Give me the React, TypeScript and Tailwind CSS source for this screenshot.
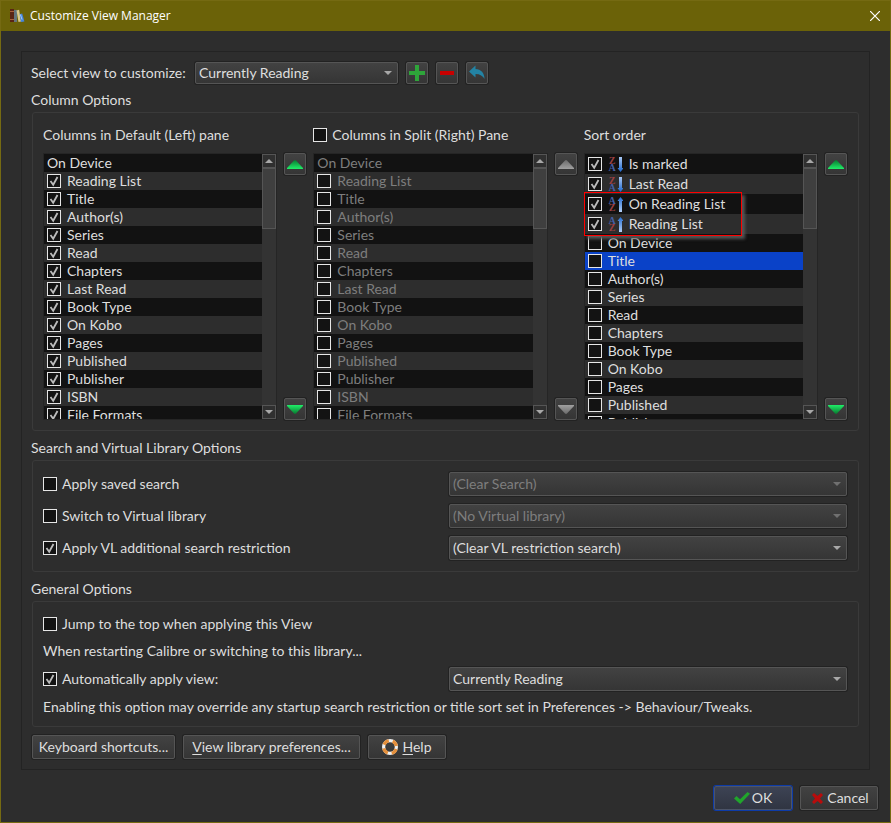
import React, { useId, useState } from "react";
import clsx from "clsx";

type SortDir = "asc" | "desc";

interface ColumnItem {
  name: string;
  checked?: boolean;
  noBox?: boolean;
  sort?: SortDir;
  selected?: boolean;
}

const columnNames = [
  "Reading List",
  "Title",
  "Author(s)",
  "Series",
  "Read",
  "Chapters",
  "Last Read",
  "Book Type",
  "On Kobo",
  "Pages",
  "Published",
  "Publisher",
  "ISBN",
  "File Formats",
];

const leftColumns: ColumnItem[] = [
  { name: "On Device", noBox: true },
  ...columnNames.map((name) => ({ name, checked: true })),
];

const rightColumns: ColumnItem[] = [
  { name: "On Device", noBox: true },
  ...columnNames.map((name) => ({ name })),
];

const sortColumns: ColumnItem[] = [
  { name: "Is marked", checked: true, sort: "desc" },
  { name: "Last Read", checked: true, sort: "desc" },
  { name: "On Reading List", checked: true, sort: "asc" },
  { name: "Reading List", checked: true, sort: "asc" },
  { name: "On Device" },
  { name: "Title", selected: true },
  { name: "Author(s)" },
  { name: "Series" },
  { name: "Read" },
  { name: "Chapters" },
  { name: "Book Type" },
  { name: "On Kobo" },
  { name: "Pages" },
  { name: "Published" },
  { name: "Publisher" },
];

const raised =
  "rounded-[2px] border border-[#555] bg-linear-to-b from-[#424242] to-[#353535] shadow-[0_0_0_1px_#222]";

/* =====================
   Icons
===================== */
const BooksIcon = () => (
  <svg width="16" height="16" viewBox="0 0 16 16" aria-hidden="true">
    <rect x="1" y="1" width="4" height="13" fill="#5a2414" />
    <path d="M1 3.5h4M1 11.5h4" stroke="#a8603c" />
    <rect x="5" y="2" width="3" height="12" fill="#64747c" />
    <path d="M7.5 2.4l2.6-.6 2 11.8-2.6.5z" fill="#d9c88c" />
    <path d="M10.6 6.2l2.6-.7 2.2 8-3.4.6z" fill="#4585dc" />
    <path d="M11.4 6.5l1.6 5" stroke="#a8ccfa" />
  </svg>
);

const Triangle = ({ down, muted, small }: { down?: boolean; muted?: boolean; small?: boolean }) => {
  const id = useId();
  const stops = muted ? ["#6c6c6c", "#a0a0a0"] : ["#087a30", "#20ee68"];
  if (small) {
    return (
      <svg width="8" height="4" viewBox="0 0 8 4" className={clsx(down && "rotate-180")} aria-hidden="true">
        <path d="M0 4L4 0l4 4z" fill={muted ? "#707070" : "#a8a8a8"} />
      </svg>
    );
  }
  return (
    <svg width="16" height="9" viewBox="0 0 16 9" className={clsx(down && "rotate-180")} aria-hidden="true">
      <linearGradient id={id} x1="0" y1="0" x2="0" y2="1">
        <stop offset="0" stopColor={stops[0]} />
        <stop offset="1" stopColor={stops[1]} />
      </linearGradient>
      <path d="M0 8L7 .5q1-.8 2 0L16 8v1H0z" fill={`url(#${id})`} />
    </svg>
  );
};

const SortIcon = ({ dir }: { dir: SortDir }) => {
  const id = useId();
  const letterA = "#4560a4";
  const letterZ = "#9a4042";
  const desc = dir === "desc";
  return (
    <svg width="15" height="16" viewBox="0 0 15 16" className="shrink-0" aria-hidden="true">
      <linearGradient id={id} gradientUnits="userSpaceOnUse" x1="0" y1="0" x2="0" y2="16">
        <stop offset="0" stopColor={desc ? "#b4d0f8" : "#1c68d0"} />
        <stop offset="1" stopColor={desc ? "#1c68d0" : "#b4d0f8"} />
      </linearGradient>
      <g fontFamily="Liberation Serif, serif" fontSize="10" fontWeight="700" textAnchor="middle">
        <text x="4" y="8" fill={desc ? letterZ : letterA}>{desc ? "Z" : "A"}</text>
        <text x="4" y="15" fill={desc ? letterA : letterZ}>{desc ? "A" : "Z"}</text>
      </g>
      <path
        d={desc ? "M11 1h3v11h1.500L12.500 16l-3-4H11z" : "M11 16h3V5h1.500L12.500 1l-3 4H11z"}
        fill={`url(#${id})`}
      />
    </svg>
  );
};

const PlusIcon = () => (
  <svg width="16" height="16" viewBox="0 0 16 16" aria-hidden="true">
    <path d="M6 0h4v6h6v4h-6v6H6v-6H0V6h6z" fill="#2ea53a" />
  </svg>
);

const MinusIcon = () => (
  <svg width="16" height="16" viewBox="0 0 16 16" aria-hidden="true">
    <rect x="1" y="6" width="14" height="4" fill="#c80000" />
  </svg>
);

const UndoIcon = () => (
  <svg width="16" height="16" viewBox="0 0 16 16" aria-hidden="true">
    <path d="M0 6.500L6.500.5v3.600c5.500.3 9 4 9 9.900C14 11 11 9 6.500 9v3.600z" fill="#2383a4" />
  </svg>
);

const HelpIcon = () => (
  <svg width="16" height="16" viewBox="0 0 16 16" aria-hidden="true">
    <circle cx="8" cy="8" r="6.4" fill="none" stroke="#f0f0f0" strokeWidth="3.2" />
    <circle
      cx="8"
      cy="8"
      r="6.4"
      fill="none"
      stroke="#e58f3a"
      strokeWidth="3.2"
      strokeDasharray="6 4.053"
      strokeDashoffset="-2.03"
    />
  </svg>
);

const OkIcon = () => (
  <svg width="16" height="16" viewBox="0 0 16 16" aria-hidden="true">
    <path d="M0 8.500L2.500 6 6 9.200 13.500 2 16 3.800 6.200 14z" fill="#21a52c" />
  </svg>
);

const CancelIcon = () => (
  <svg width="16" height="16" viewBox="0 0 16 16" aria-hidden="true">
    <path d="M3 5l2-2 3.500 3L12 3l2 2-3 3.500L14 12l-2 2-3.500-3L5 14l-2-2 3-3.500z" fill="#b80c0c" />
  </svg>
);

/* =====================
   Controls
===================== */
interface CheckProps {
  checked?: boolean;
  disabled?: boolean;
  children?: React.ReactNode;
  className?: string;
}

const Check = ({ checked = false, disabled, children, className }: CheckProps) => {
  const [on, setOn] = useState(checked);
  return (
    <label className={clsx("flex items-center", className)}>
      <span className="relative block size-3.5 shrink-0">
        <input
          type="checkbox"
          checked={on}
          disabled={disabled}
          onChange={() => setOn(!on)}
          className="block size-3.5 appearance-none border border-[#e6e6e6] bg-[#131313]"
        />
        {on && (
          <svg viewBox="0 0 14 14" className="pointer-events-none absolute inset-0 size-3.5" aria-hidden="true">
            <path d="M3.500 7l2.700 3.800L10.500 3" fill="none" stroke="#bcbcbc" strokeWidth="1.800" />
          </svg>
        )}
      </span>
      {children}
    </label>
  );
};

interface ComboProps {
  id: string;
  value: string;
  label?: string;
  disabled?: boolean;
  className?: string;
}

const Combo = ({ id, value, label, disabled, className }: ComboProps) => (
  <div className={clsx("relative", className)}>
    <select
      id={id}
      aria-label={label}
      disabled={disabled}
      className={clsx(
        raised,
        "block size-full appearance-none px-[3px] disabled:opacity-100",
        disabled ? "text-[#7e7e7e]" : "text-[#dedede]",
      )}
    >
      <option>{value}</option>
    </select>
    <span className="pointer-events-none absolute inset-y-0 right-1.5 flex items-center">
      <Triangle small down muted={disabled} />
    </span>
  </div>
);

const ToolButton = ({ title, disabled, children }: { title: string; disabled?: boolean; children: React.ReactNode }) => (
  <button type="button" title={title} disabled={disabled} className={clsx(raised, "grid size-[22px] shrink-0 place-items-center")}>
    {children}
  </button>
);

const ScrollBar = () => (
  <div className="flex w-3.5 shrink-0 flex-col bg-[#333]">
    <button type="button" aria-label="Scroll up" className="grid h-3.5 place-items-center border border-[#555] bg-[#303030]">
      <Triangle small />
    </button>
    <div className="h-[61px] border border-[#555] bg-[#3f3f3f]" />
    <button type="button" aria-label="Scroll down" className="mt-auto grid h-3.5 place-items-center border border-[#555] bg-[#303030]">
      <Triangle small down />
    </button>
  </div>
);

const ColumnList = ({ items, disabled, children }: { items: ColumnItem[]; disabled?: boolean; children?: React.ReactNode }) => (
  <div className="flex gap-[7px]">
    <div className="relative flex h-[267px] min-w-0 flex-1 border border-[#252525]">
      <ul className={clsx("min-w-0 flex-1 overflow-hidden", disabled && "text-[#7e7e7e]")}>
        {items.map((item) => (
          <li
            key={item.name}
            className={clsx(
              "flex items-center px-[3px]",
              item.sort ? "h-5" : "h-[18px]",
              item.selected ? "bg-[#0a42c8]" : "odd:bg-[#121212] even:bg-[#2d2d2d]",
            )}
          >
            {item.noBox ? (
              item.name
            ) : (
              <Check checked={item.checked} disabled={disabled} className="gap-1.5">
                {item.sort && <SortIcon dir={item.sort} />}
                {item.name}
              </Check>
            )}
          </li>
        ))}
      </ul>
      <ScrollBar />
      {children}
    </div>
    <div className="flex flex-col justify-between">
      <ToolButton title="Move up" disabled={disabled}>
        <Triangle muted={disabled} />
      </ToolButton>
      <ToolButton title="Move down" disabled={disabled}>
        <Triangle down muted={disabled} />
      </ToolButton>
    </div>
  </div>
);

const Group = ({ title, className, children }: { title: string; className?: string; children: React.ReactNode }) => (
  <section>
    <h2 className="-ml-px h-6 leading-6">{title}</h2>
    <div className={clsx("rounded-[3px] border border-[#3a3a3a] pr-[11px] pl-2.5", className)}>{children}</div>
  </section>
);

const PushButton = ({ className, children }: { className?: string; children: React.ReactNode }) => (
  <button type="button" className={clsx(raised, "flex h-6 items-center justify-center", className)}>
    {children}
  </button>
);

const App = () => {
  return (
    <div className="flex min-h-screen flex-col border border-[#756a12] bg-[#2d2d2d] font-['Lato','Noto_Sans',sans-serif] text-[14px] leading-[18px] text-[#dedede]">
      <header className="flex h-[30px] items-center gap-[5px] bg-[#6b6208] pr-[7px] pl-2 text-white">
        <BooksIcon />
        <h1 className="flex-1 font-['Open_Sans',sans-serif] text-[12px]">Customize View Manager</h1>
        <button type="button" aria-label="Close" className="grid size-4 place-items-center">
          <svg width="10" height="10" viewBox="0 0 10 10" aria-hidden="true">
            <path d="M0 0l10 10M10 0L0 10" stroke="#fff" strokeWidth="1.200" />
          </svg>
        </button>
      </header>

      <main className="mx-5 mt-5 border border-[#232323] px-2.5 py-2.5">
        <div className="flex items-center gap-2">
          <label htmlFor="view" className="-ml-px w-[156px]">Select view to customize:</label>
          <Combo id="view" value="Currently Reading" className="h-[22px] w-[203px]" />
          <ToolButton title="Add view"><PlusIcon /></ToolButton>
          <ToolButton title="Delete view"><MinusIcon /></ToolButton>
          <ToolButton title="Rename view"><UndoIcon /></ToolButton>
        </div>

        <div className="mt-1 flex flex-col gap-[5px]">
          <Group title="Column Options" className="grid grid-cols-3 gap-x-[7px] pt-3 pb-2.5">
            <div>
              <h3 className="mb-2 h-5 leading-5">Columns in Default (Left) pane</h3>
              <ColumnList items={leftColumns} />
            </div>
            <div>
              <Check className="mb-2 h-5 gap-[5px]">Columns in Split (Right) Pane</Check>
              <ColumnList items={rightColumns} disabled />
            </div>
            <div>
              <h3 className="mb-2 h-5 leading-5">Sort order</h3>
              <ColumnList items={sortColumns}>
                {/* highlight around the ascending entries */}
                <div className="pointer-events-none absolute top-[38px] -left-px h-11 w-[158px] border border-[#f00] shadow-[3px_3px_3px_#555]" />
              </ColumnList>
            </div>
          </Group>

          <Group title="Search and Virtual Library Options" className="flex flex-col gap-2 py-[11px]">
            <div className="grid grid-cols-2 items-center gap-2">
              <Check className="gap-[5px]">Apply saved search</Check>
              <Combo id="saved-search" value="(Clear Search)" label="Saved search" disabled className="h-6" />
            </div>
            <div className="grid grid-cols-2 items-center gap-2">
              <Check className="gap-[5px]">Switch to Virtual library</Check>
              <Combo id="library" value="(No Virtual library)" label="Virtual library" disabled className="h-6" />
            </div>
            <div className="grid grid-cols-2 items-center gap-2">
              <Check checked className="gap-[5px]">Apply VL additional search restriction</Check>
              <Combo id="restriction" value="(Clear VL restriction search)" label="VL restriction" className="h-6" />
            </div>
          </Group>

          <Group title="General Options" className="pt-2.5 pb-[7px]">
            <Check className="h-6 gap-[5px]">Jump to the top when applying this View</Check>
            <p className="mt-[3px] mb-1 h-6 leading-6">When restarting Calibre or switching to this library...</p>
            <div className="grid grid-cols-2 items-center gap-2">
              <Check checked className="gap-[5px]">Automatically apply view:</Check>
              <Combo id="auto-view" value="Currently Reading" label="View to apply" className="h-6" />
            </div>
            <p className="mt-1 min-h-6 leading-6">
              Enabling this option may override any startup search restriction or title sort set in Preferences -&gt; Behaviour/Tweaks.
            </p>
          </Group>
        </div>

        <div className="mt-2 flex gap-2">
          <PushButton className="w-[143px]">Keyboard shortcuts...</PushButton>
          <PushButton className="w-[177px]">
            <span><u className="underline-offset-2">V</u>iew library preferences...</span>
          </PushButton>
          <PushButton className="w-[78px] gap-1">
            <HelpIcon />
            <span><u className="underline-offset-2">H</u>elp</span>
          </PushButton>
        </div>
      </main>

      <footer className="mt-4 flex justify-end gap-2 px-3 pb-3">
        <button
          type="button"
          className="flex h-6 w-[78px] items-center justify-center gap-0.5 rounded-[2px] border border-[#4c5468] bg-linear-to-b from-[#3d4354] to-[#303542] shadow-[0_0_0_1px_#0d3ba8]"
        >
          <OkIcon />
          OK
        </button>
        <PushButton className="w-[78px] gap-0.5">
          <CancelIcon />
          Cancel
        </PushButton>
      </footer>
    </div>
  );
};

export default App;
